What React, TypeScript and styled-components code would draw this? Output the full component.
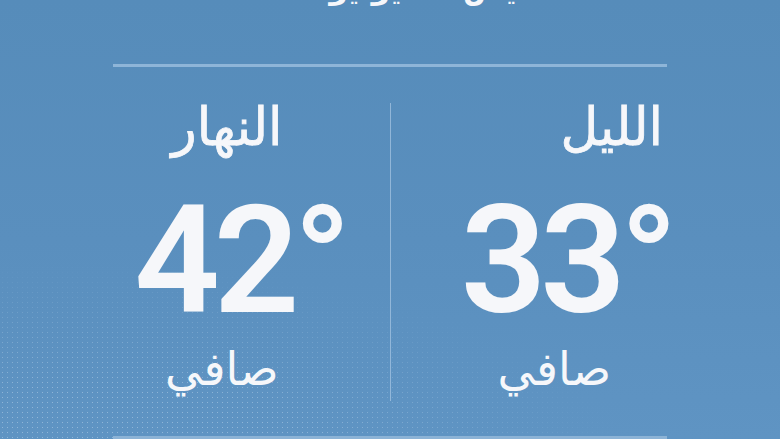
import React from "react";
import styled, { createGlobalStyle } from "styled-components";

const Global = createGlobalStyle`
  html, body { margin: 0; padding: 0; }
  body { background: #578dbb; font-family: "Noto Sans", "DejaVu Sans", sans-serif; }
`;

const Page = styled.div`
  position: relative;
  width: 780px;
  height: 439px;
  overflow: hidden;
  background: linear-gradient(180deg, #568cba 0%, #5a8fbe 55%, #5f94c3 100%);
  color: #f6f7fa;
  direction: rtl;
  &::before {
    content: "";
    position: absolute;
    inset: 0;
    pointer-events: none;
    background-image: radial-gradient(rgba(205, 224, 242, 0.6) 0.7px, transparent 1px);
    background-size: 5px 5px;
    -webkit-mask-image: radial-gradient(ellipse 560px 210px at 80px 470px, #000 40%, transparent 100%);
    mask-image: radial-gradient(ellipse 560px 210px at 80px 470px, #000 40%, transparent 100%);
    opacity: 0.75;
  }
`;

const Header = styled.div`
  height: 9px;
  overflow: hidden;
  display: flex;
  align-items: flex-start;
  justify-content: center;
  padding-left: 130px;
`;

const DateText = styled.div`
  font-size: 30px;
  font-weight: 700;
  line-height: 30px;
  margin-top: -27px;
  white-space: nowrap;
`;

const Body = styled.div`
  position: relative;
  padding: 0 113px;
  display: flex;
  flex-direction: column;
`;

const Rule = styled.div`
  height: 3px;
  margin-top: 55px;
  background: rgba(160, 195, 225, 0.75);
`;

const Grid = styled.div`
  display: grid;
  grid-template-columns: minmax(0, 1fr) 1px minmax(0, 1fr);
  margin-top: 34px;
  height: 300px;
`;

const Separator = styled.div`
  background: rgba(170, 200, 228, 0.7);
  margin-top: 2px;
`;

const Column = styled.div`
  display: flex;
  flex-direction: column;
  align-items: flex-start;
  min-width: 0;
`;

const Label = styled.div<{ $offset: number }>`
  margin-right: ${(p) => p.$offset}px;
  font-size: 52px;
  font-weight: 500;
  line-height: 56px;
  margin-top: -4px;
  white-space: nowrap;
  -webkit-text-stroke: 0.8px #f6f7fa;
`;

const Temp = styled.div<{ $offset: number }>`
  margin-right: ${(p) => p.$offset}px;
  direction: ltr;
  font-family: Roboto, "Noto Sans", sans-serif;
  font-size: 150px;
  font-weight: 600;
  line-height: 120px;
  letter-spacing: -6px;
  margin-top: 48px;
  white-space: nowrap;
`;

const Cond = styled.div<{ $offset: number }>`
  margin-right: ${(p) => p.$offset}px;
  font-size: 46px;
  font-weight: 400;
  line-height: 54px;
  margin-top: 19px;
  white-space: nowrap;
`;

const BottomRule = styled.div`
  height: 4px;
  margin-top: 35px;
  background: #8cb3d6;
`;

export default function App() {
  return (
    <Page>
      <Global />
      <Header>
        <DateText>الخميس، 24 يوليو</DateText>
      </Header>
      <Body>
        <Rule />
        <Grid>
          <Column>
            <Label $offset={4}>الليل</Label>
            <Temp $offset={-5}>33°</Temp>
            <Cond $offset={56}>صافي</Cond>
          </Column>
          <Separator />
          <Column>
            <Label $offset={107}>النهار</Label>
            <Temp $offset={44}>42°</Temp>
            <Cond $offset={111}>صافي</Cond>
          </Column>
        </Grid>
        <BottomRule />
      </Body>
    </Page>
  );
}
